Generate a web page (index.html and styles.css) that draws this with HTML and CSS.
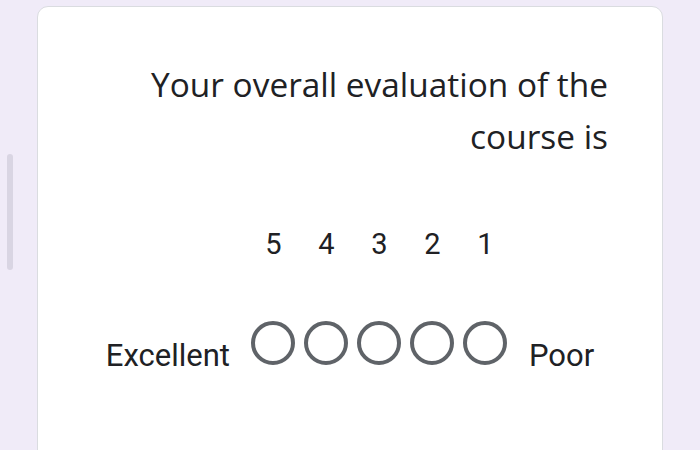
FILE: index.html
```html
<!DOCTYPE html>
<html>
<head>
<meta charset="utf-8">
<link rel="stylesheet" href="styles.css">
</head>
<body>
<div class="scrollbar"></div>
<div class="card">
  <div class="title">Your overall evaluation of the course is</div>
  <div class="scale">
    <span class="label excellent">Excellent</span>
    <span class="num">5</span>
    <span class="num">4</span>
    <span class="num">3</span>
    <span class="num">2</span>
    <span class="num">1</span>
    <span class="radio"></span>
    <span class="radio"></span>
    <span class="radio"></span>
    <span class="radio"></span>
    <span class="radio"></span>
    <span class="label poor">Poor</span>
  </div>
</div>
</body>
</html>
```
FILE: styles.css
```css
html, body {
  margin: 0;
  padding: 0;
  height: 100%;
  overflow: hidden;
}
body {
  background: #f0ebf8;
  font-family: Roboto, "Liberation Sans", sans-serif;
  color: #202124;
}
.scrollbar {
  position: absolute;
  left: 7px;
  top: 154px;
  width: 6px;
  height: 116px;
  border-radius: 3px;
  background: #d9d5e3;
}
.card {
  margin: 6px 0 0 37px;
  width: 626px;
  height: 500px;
  background: #fff;
  border: 1px solid #dadce0;
  border-radius: 11px;
  box-sizing: border-box;
  padding: 51px 54px 0 0;
}
.title {
  margin-left: auto;
  width: 480px;
  text-align: right;
  font-family: "Open Sans", sans-serif;
  font-size: 33.4px;
  line-height: 52px;
  color: #202124;
}
.scale {
  display: grid;
  grid-template-columns: auto repeat(5, 53px) auto;
  justify-content: center;
  justify-items: center;
  row-gap: 62px;
  margin: 68px 0 0 54px;
  color: #202124;
}
.num {
  grid-row: 1;
  font-size: 29px;
  line-height: 29px;
}
.radio {
  grid-row: 2;
  width: 44px;
  height: 44px;
  box-sizing: border-box;
  border: 4px solid #5f6368;
  border-radius: 50%;
}
.label {
  grid-row: 1 / span 2;
  align-self: end;
  margin-bottom: -6px;
  font-size: 31px;
  line-height: 31px;
}
.excellent {
  grid-column: 1;
  margin-right: 17px;
}
.poor {
  grid-column: 7;
  margin-left: 17px;
}
```
